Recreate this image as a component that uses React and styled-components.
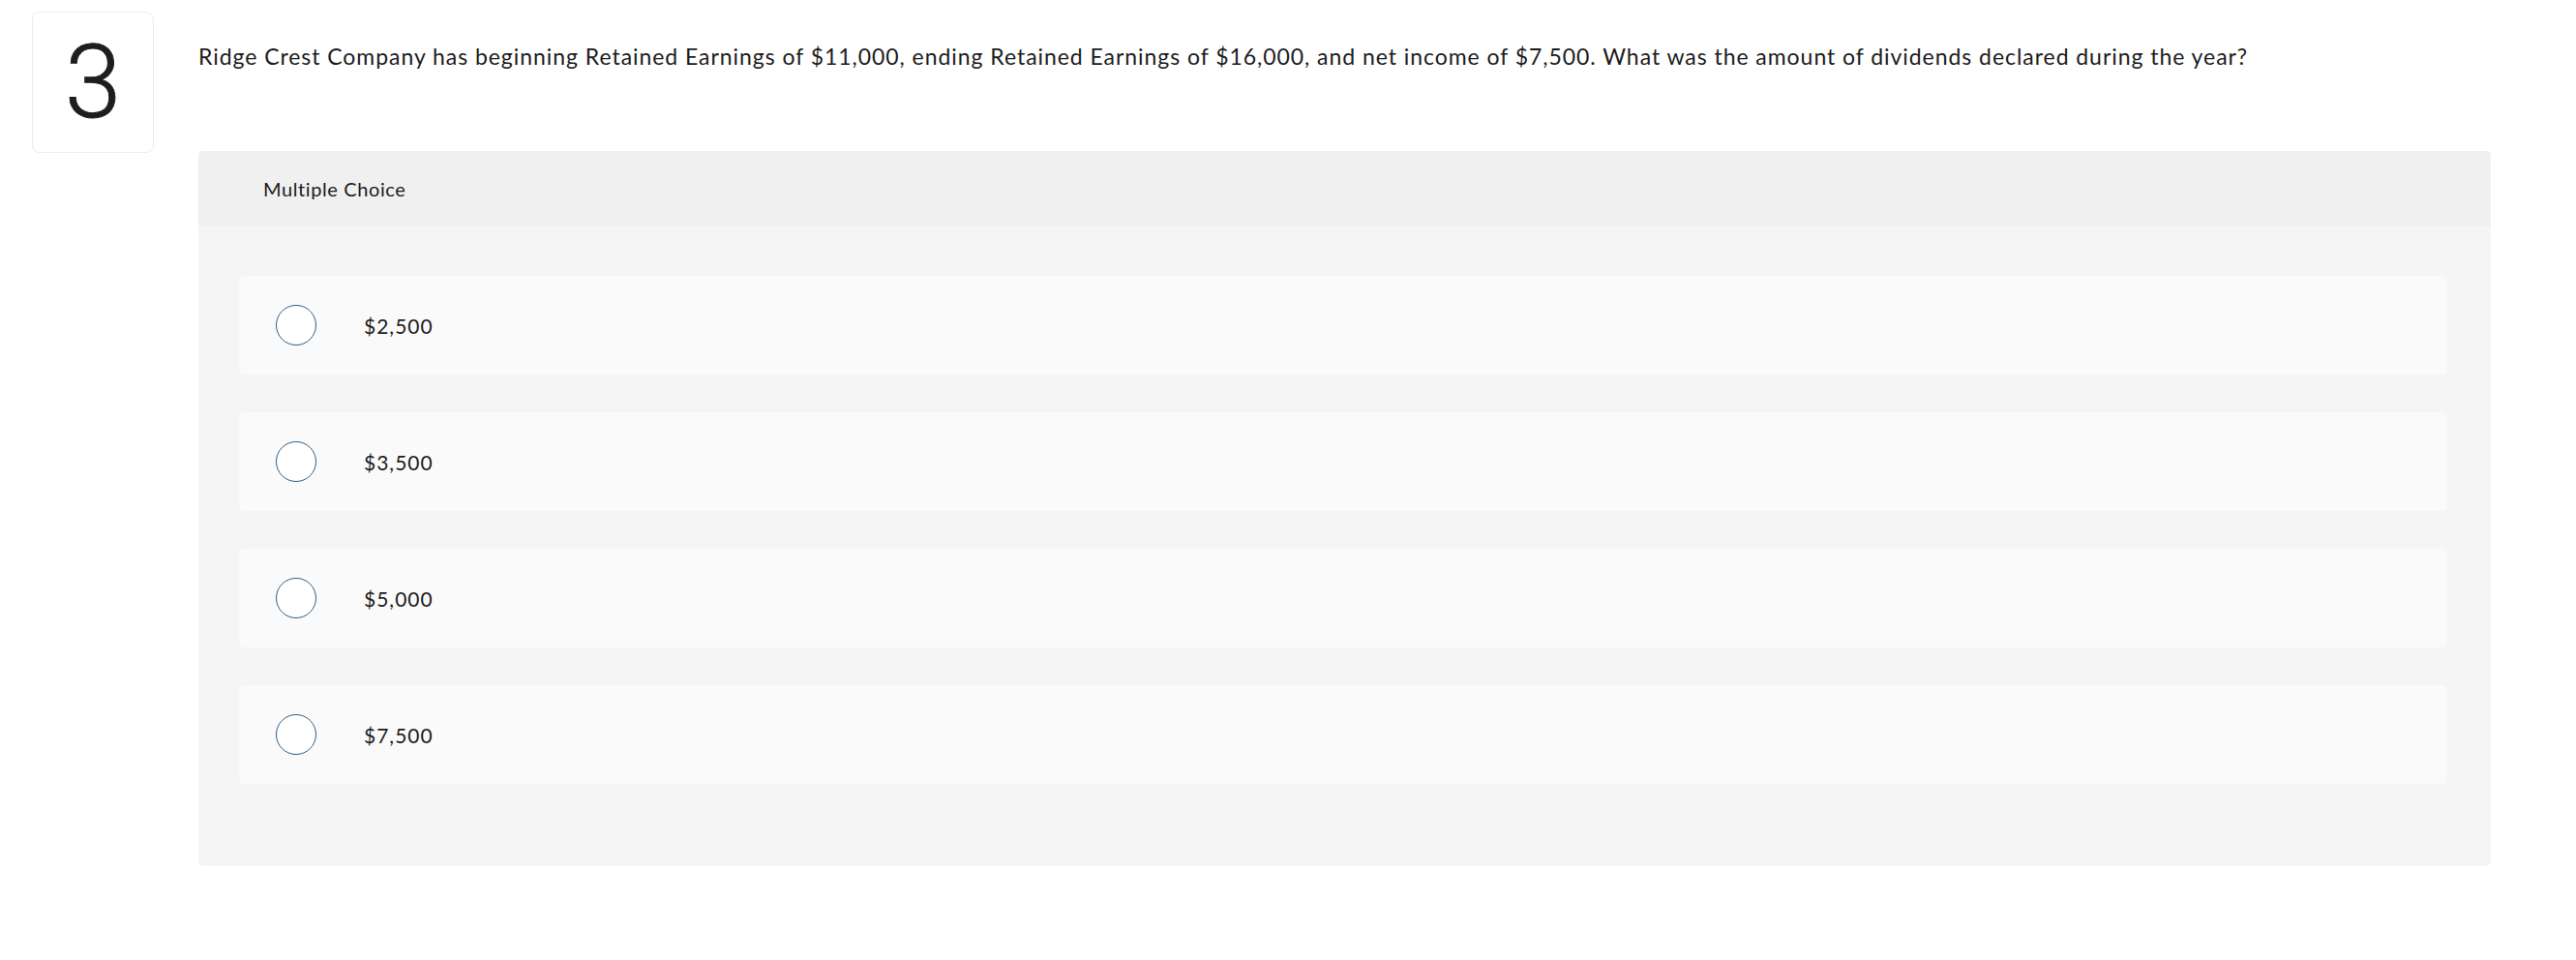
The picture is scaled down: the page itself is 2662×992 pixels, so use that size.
import React from "react";
import styled, { createGlobalStyle } from "styled-components";

const GlobalStyle = createGlobalStyle`
  body {
    margin: 0;
    background: #ffffff;
    font-family: Lato, "Liberation Sans", sans-serif;
    color: #1c1c1c;
  }
`;

const Page = styled.div`
  display: flex;
  align-items: flex-start;
  gap: 46px;
  padding: 12px 88px 40px 33px;
`;

const NumberBox = styled.div`
  flex: none;
  width: 124px;
  height: 144px;
  border: 1px solid #ececec;
  border-radius: 8px;
  display: flex;
  align-items: center;
  justify-content: center;
  font-family: Roboto, Lato, sans-serif;
  font-size: 105px;
  font-weight: 300;
  color: #1e1e1e;
  line-height: 1;
  -webkit-text-stroke: 1px #1e1e1e;
`;

const Content = styled.div`
  flex: 1;
  min-width: 0;
`;

const Question = styled.p`
  margin: 0;
  padding-top: 31px;
  font-size: 23px;
  letter-spacing: 0.95px;
  line-height: 30px;
  white-space: nowrap;
  color: #1c1c1c;
`;

const Panel = styled.div`
  margin-top: 83px;
  border-radius: 5px;
  overflow: hidden;
  background: #f5f5f5;
`;

const PanelHeader = styled.div`
  height: 78px;
  display: flex;
  align-items: center;
  padding-left: 67px;
  background: #f0f0f0;
  font-size: 20px;
  letter-spacing: 0.6px;
  color: #1c1c1c;
`;

const Choices = styled.div`
  display: flex;
  flex-direction: column;
  gap: 39px;
  padding: 51px 45px 85px 42px;
`;

const Choice = styled.label`
  height: 102px;
  display: flex;
  align-items: center;
  gap: 49px;
  padding-left: 38px;
  background: #fafafa;
  border-radius: 5px;
  font-size: 21px;
  letter-spacing: 1px;
  color: #1c1c1c;
  cursor: pointer;
`;

const Radio = styled.span`
  flex: none;
  width: 40px;
  height: 40px;
  border: 1.5px solid #2d5f8f;
  border-radius: 50%;
  background: #ffffff;
`;

const options = ["$2,500", "$3,500", "$5,000", "$7,500"];

export default function App() {
  return (
    <>
      <GlobalStyle />
      <Page>
        <NumberBox>3</NumberBox>
        <Content>
          <Question>
            Ridge Crest Company has beginning Retained Earnings of $11,000, ending Retained Earnings of $16,000, and net income of $7,500. What was the amount of dividends declared during the year?
          </Question>
          <Panel>
            <PanelHeader>Multiple Choice</PanelHeader>
            <Choices>
              {options.map((o) => (
                <Choice key={o}>
                  <Radio />
                  {o}
                </Choice>
              ))}
            </Choices>
          </Panel>
        </Content>
      </Page>
    </>
  );
}
